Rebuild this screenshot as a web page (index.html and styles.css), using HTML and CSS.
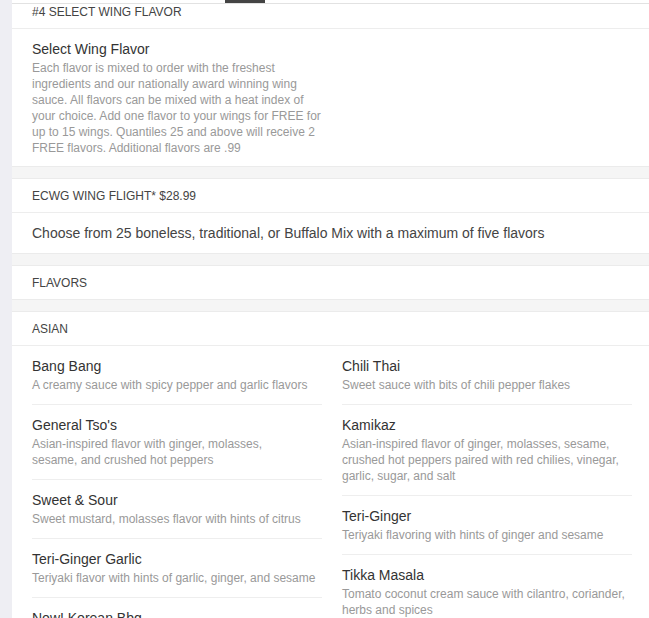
FILE: index.html
```html
<!DOCTYPE html>
<html lang="en">
<head>
  <meta charset="UTF-8">
  <meta name="viewport" content="width=device-width, initial-scale=1.0">
  <title>ECWG Menu - Wing Flavors</title>
  <link rel="stylesheet" href="styles.css">
</head>
<body>
  <div class="content">
    <!-- Menu tabs (scrolled, only the underline shows) -->
    <div class="tabs">
      <span class="tab-active"></span>
    </div>

    <div class="menu">
      <section class="card">
        <div class="card-head">#4 SELECT WING FLAVOR</div>
        <div class="card-body">
          <h3 class="item-name">Select Wing Flavor</h3>
          <p class="item-desc narrow">Each flavor is mixed to order with the freshest ingredients and our nationally award winning wing sauce. All flavors can be mixed with a heat index of your choice. Add one flavor to your wings for FREE for up to 15 wings. Quantiles 25 and above will receive 2 FREE flavors. Additional flavors are .99</p>
        </div>
      </section>

      <section class="card">
        <div class="card-head">ECWG WING FLIGHT* $28.99</div>
        <div class="card-body">
          <p class="lead">Choose from 25 boneless, traditional, or Buffalo Mix with a maximum of five flavors</p>
        </div>
      </section>

      <section class="card">
        <div class="card-head last">FLAVORS</div>
      </section>

      <section class="card">
        <div class="card-head">ASIAN</div>
        <div class="flavor-grid">
          <ul class="flavor-list">
            <li class="flavor">
              <h3 class="item-name">Bang Bang</h3>
              <p class="item-desc">A creamy sauce with spicy pepper and garlic flavors</p>
            </li>
            <li class="flavor">
              <h3 class="item-name">General Tso's</h3>
              <p class="item-desc">Asian-inspired flavor with ginger, molasses,<br>sesame, and crushed hot peppers</p>
            </li>
            <li class="flavor">
              <h3 class="item-name">Sweet &amp; Sour</h3>
              <p class="item-desc">Sweet mustard, molasses flavor with hints of citrus</p>
            </li>
            <li class="flavor">
              <h3 class="item-name">Teri-Ginger Garlic</h3>
              <p class="item-desc">Teriyaki flavor with hints of garlic, ginger, and sesame</p>
            </li>
            <li class="flavor">
              <h3 class="item-name">Now! Korean Bbq</h3>
              <p class="item-desc">Sweet and smoky Korean barbecue sauce</p>
            </li>
          </ul>
          <ul class="flavor-list">
            <li class="flavor">
              <h3 class="item-name">Chili Thai</h3>
              <p class="item-desc">Sweet sauce with bits of chili pepper flakes</p>
            </li>
            <li class="flavor">
              <h3 class="item-name">Kamikaz</h3>
              <p class="item-desc">Asian-inspired flavor of ginger, molasses, sesame, crushed hot peppers paired with red chilies, vinegar, garlic, sugar, and salt</p>
            </li>
            <li class="flavor">
              <h3 class="item-name">Teri-Ginger</h3>
              <p class="item-desc">Teriyaki flavoring with hints of ginger and sesame</p>
            </li>
            <li class="flavor">
              <h3 class="item-name">Tikka Masala</h3>
              <p class="item-desc">Tomato coconut cream sauce with cilantro, coriander, herbs and spices</p>
            </li>
          </ul>
        </div>
      </section>
    </div>
  </div>
</body>
</html>
```

FILE: styles.css
```css
/* Page */
body {
  margin: 0;
  background: #eeeef3; /* sidebar edge on the left */
  font-family: "Liberation Sans", Arial, sans-serif;
  color: #333;
  overflow: hidden;
}

.content {
  margin-left: 12px;
  background: #f5f5f5;
  min-height: 100vh;
}

/* Tab bar stuck to the top while scrolled */
.tabs {
  position: fixed;
  top: 0;
  left: 12px;
  right: 0;
  height: 3px;
  background: #fff;
  border-bottom: 1px solid #e2e2e2;
  z-index: 2;
}

.tab-active {
  position: absolute;
  left: 213px;
  top: 0;
  width: 40px;
  height: 3px;
  background: #444;
}

/* Cards */
.menu {
  margin-top: -6px;
}

.card {
  background: #fff;
  border-top: 1px solid #ebebeb;
  border-bottom: 1px solid #ebebeb;
  margin-bottom: 11px;
}

.card-head {
  height: 31px;
  line-height: 31px;
  padding: 2px 20px 0;
  font-size: 12px;
  color: #444;
  border-bottom: 1px solid #ededed;
}

.card-head.last {
  border-bottom: none;
}

.card-body {
  padding: 10px 20px;
}

.lead {
  margin: 0;
  font-size: 14px;
  line-height: 20px;
  color: #444;
}

/* Items */
.item-name {
  margin: 0 0 1px;
  font-size: 14px;
  font-weight: normal;
  line-height: 20px;
  color: #333;
}

.item-desc {
  margin: 0;
  font-size: 12px;
  line-height: 16px;
  color: #999;
}

.item-desc.narrow {
  width: 292px;
}

/* Flavor columns */
.flavor-grid {
  display: grid;
  grid-template-columns: 1fr 1fr;
  column-gap: 20px;
  padding: 0 17px 0 20px;
}

.flavor-list {
  list-style: none;
  margin: 0;
  padding: 0;
}

.flavor {
  padding: 10px 0 11px;
  border-bottom: 1px solid #eeeeee;
}
```
